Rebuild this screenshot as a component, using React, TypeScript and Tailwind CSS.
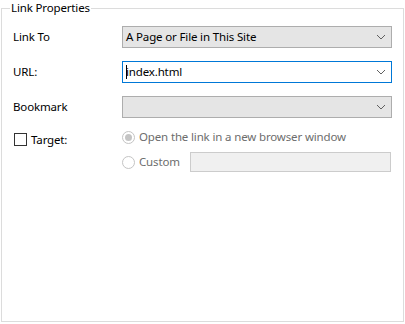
import React from "react";

function Chevron() {
  return (
    <svg width="10" height="6" viewBox="0 0 10 6" className="shrink-0">
      <path d="M1 1 L5 5 L9 1" fill="none" stroke="#606060" strokeWidth="1" />
    </svg>
  );
}

function Radio({ checked }: { checked?: boolean }) {
  return (
    <span className="w-[13px] h-[13px] rounded-full border border-[#c4c4c4] bg-white flex items-center justify-center shrink-0">
      {checked && <span className="w-[7px] h-[7px] rounded-full bg-[#c4c4c4]" />}
    </span>
  );
}

export default function App() {
  return (
    <div
      className="w-[405px] h-[324px] bg-white text-[11.5px] tracking-[-0.15px] text-black"
      style={{ fontFamily: '"Noto Sans", "Liberation Sans", sans-serif' }}
    >
      <fieldset className="ml-[1px] w-[403px] h-[322px] border border-[#dcdcdc] px-[11px]">
        <legend className="ml-[-3px] px-[1px] leading-[16px]">Link Properties</legend>
        <div className="flex flex-col pt-[10px]">
          {/* Link To */}
          <div className="flex items-center h-[22px]">
            <span className="w-[109px]">Link To</span>
            <div className="flex-1 h-[22px] flex items-center justify-between bg-[#e5e5e5] border border-[#adadad] pl-[3px] pr-[5px]">
              <span>A Page or File in This Site</span>
              <Chevron />
            </div>
          </div>

          {/* URL */}
          <div className="flex items-center h-[22px] mt-[13px]">
            <span className="w-[109px]">URL:</span>
            <div className="flex-1 h-[22px] flex items-center justify-between bg-white border border-[#0078d7] pl-[3px] pr-[5px]">
              <span className="flex items-center">
                <span className="w-[1px] h-[14px] bg-black mr-[-1px]" />
                <span>index.html</span>
              </span>
              <Chevron />
            </div>
          </div>

          {/* Bookmark */}
          <div className="flex items-center h-[22px] mt-[13px]">
            <span className="w-[109px]">Bookmark</span>
            <div className="flex-1 h-[22px] flex items-center justify-end bg-[#e5e5e5] border border-[#adadad] pr-[5px]">
              <Chevron />
            </div>
          </div>

          {/* Target */}
          <div className="flex mt-[9px]">
            <div className="w-[109px] flex items-start pt-[6px] ml-[1px] mr-[-1px]">
              <span className="w-[13px] h-[13px] border border-[#333] bg-white shrink-0" />
              <span className="ml-[4px] leading-[13px]">Target:</span>
            </div>
            <div className="flex flex-col text-[#6d6d6d]">
              <div className="flex items-center h-[20px]">
                <Radio checked />
                <span className="ml-[4px]">Open the link in a new browser window</span>
              </div>
              <div className="flex items-center h-[20px] mt-[5px]">
                <Radio />
                <span className="ml-[4px] w-[51px]">Custom</span>
                <div className="w-[201px] h-[20px] bg-[#f0f0f0] border border-[#cccccc]" />
              </div>
            </div>
          </div>
        </div>
      </fieldset>
    </div>
  );
}
